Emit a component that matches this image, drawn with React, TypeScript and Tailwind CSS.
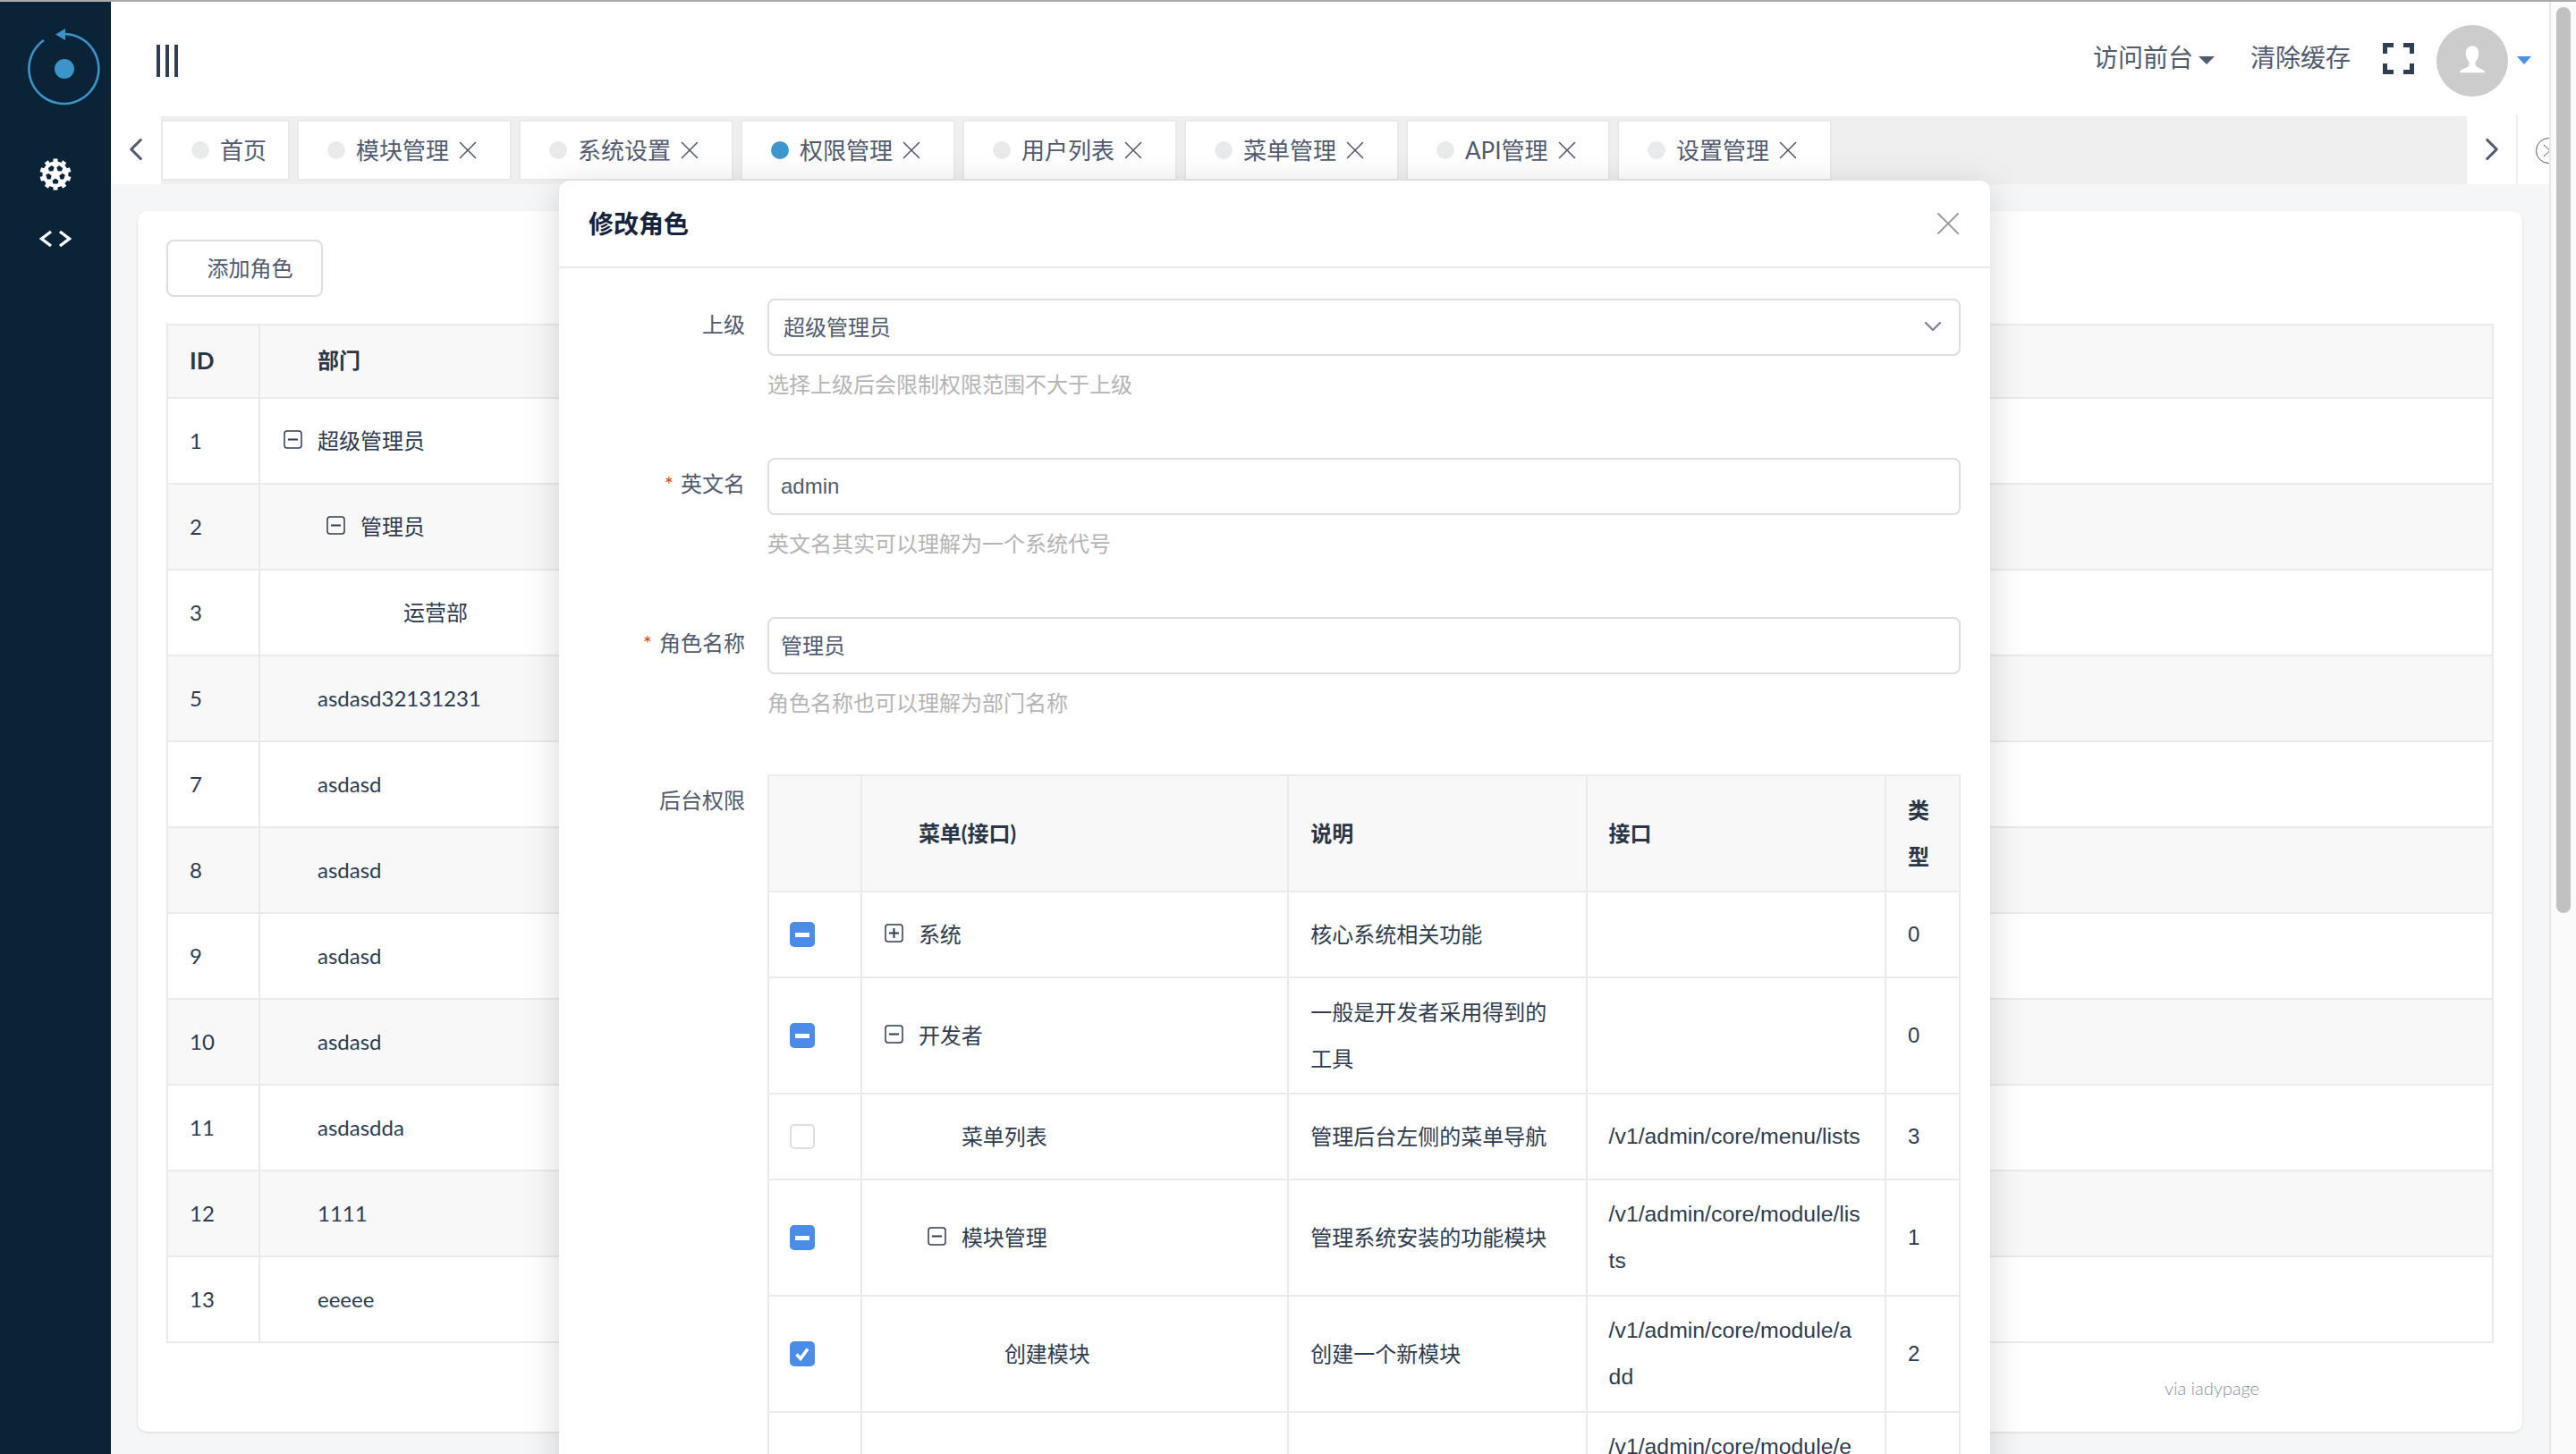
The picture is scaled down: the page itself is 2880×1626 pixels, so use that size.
import { ChevronDown, ChevronLeft, ChevronRight, X } from 'lucide-react'

const CJK = '"Noto Sans CJK SC"'

const TABS = [
  { name: '首页', w: 'w-[144px]', close: false },
  { name: '模块管理', w: 'w-[240px]', close: true },
  { name: '系统设置', w: 'w-[240px]', close: true },
  { name: '权限管理', w: 'w-[240px]', close: true, active: true },
  { name: '用户列表', w: 'w-[240px]', close: true },
  { name: '菜单管理', w: 'w-[240px]', close: true },
  { name: 'API管理', w: 'w-[228px]', close: true },
  { name: '设置管理', w: 'w-[240px]', close: true },
]

const ROLES: { id: number; name: string; level: number; tree?: boolean }[] = [
  { id: 1, name: '超级管理员', level: 0, tree: true },
  { id: 2, name: '管理员', level: 1, tree: true },
  { id: 3, name: '运营部', level: 2 },
  { id: 5, name: 'asdasd32131231', level: 0 },
  { id: 7, name: 'asdasd', level: 0 },
  { id: 8, name: 'asdasd', level: 0 },
  { id: 9, name: 'asdasd', level: 0 },
  { id: 10, name: 'asdasd', level: 0 },
  { id: 11, name: 'asdasdda', level: 0 },
  { id: 12, name: '1111', level: 0 },
  { id: 13, name: 'eeeee', level: 0 },
]

type Check = 'some' | 'none' | 'all'

const PERMS: { check: Check; name: string; level: number; icon?: '+' | '-'; desc: string; api: string; type: string }[] = [
  { check: 'some', name: '系统', level: 0, icon: '+', desc: '核心系统相关功能', api: '', type: '0' },
  { check: 'some', name: '开发者', level: 0, icon: '-', desc: '一般是开发者采用得到的工具', api: '', type: '0' },
  { check: 'none', name: '菜单列表', level: 1, desc: '管理后台左侧的菜单导航', api: '/v1/admin/core/menu/lists', type: '3' },
  { check: 'some', name: '模块管理', level: 1, icon: '-', desc: '管理系统安装的功能模块', api: '/v1/admin/core/module/lists', type: '1' },
  { check: 'all', name: '创建模块', level: 2, desc: '创建一个新模块', api: '/v1/admin/core/module/add', type: '2' },
  { check: 'none', name: '', level: 2, desc: '', api: '/v1/admin/core/module/edit', type: '' },
]

function GearIcon() {
  const teeth = [0, 36, 72, 108, 144, 180, 216, 252, 288, 324]
  const holes = [36, 108, 180, 252, 324]
  return (
    <svg viewBox="0 0 36 36" className="w-[36px] h-[36px] mt-[51px]">
      <circle cx="18" cy="18" r="14.500" fill="#fff" />
      {teeth.map((a) => (
        <rect key={a} x="15.500" y="0.500" width="5" height="5" fill="#fff" transform={`rotate(${a} 18 18)`} />
      ))}
      {holes.map((a) => (
        <path key={a} d="M15.500 7.500h5l1 3.500-3.500 2.500-3.500-2.500z" fill="#0b2336" transform={`rotate(${a} 18 18)`} />
      ))}
    </svg>
  )
}

function TreeIcon({ kind }: { kind: '+' | '-' }) {
  return (
    <svg viewBox="0 0 21 21" className="w-[21px] h-[21px] shrink-0 -mt-[3px] text-[#2f3b4e]">
      <rect x="1" y="1" width="19" height="19" rx="3" fill="none" stroke="currentColor" strokeWidth="1.5" />
      <path d="M5 10.500h11" stroke="currentColor" strokeWidth="2" />
      {kind === '+' && <path d="M10.500 5v11" stroke="currentColor" strokeWidth="2" />}
    </svg>
  )
}

function TreeCell({ name, level, icon }: { name: string; level: number; icon?: '+' | '-' }) {
  const pad = ['pl-[41px]', 'pl-[89px]', 'pl-[137px]'][level]
  const iconPad = ['left-[3px]', 'left-[51px]', 'left-[99px]'][level]
  return (
    <div className={`relative ${pad}`}>
      {icon && (
        <span className={`absolute top-1/2 -translate-y-1/2 flex ${iconPad}`}>
          <TreeIcon kind={icon} />
        </span>
      )}
      {name}
    </div>
  )
}

function CheckBox({ state }: { state: Check }) {
  if (state === 'none') {
    return <span className="block w-[28px] h-[28px] rounded-[5px] border-2 border-[#dcdee2] bg-white" />
  }
  return (
    <span className="flex items-center justify-center w-[28px] h-[28px] rounded-[5px] bg-[#4a8ce8]">
      {state === 'some' ? (
        <span className="block w-[16px] h-[5px] bg-white" />
      ) : (
        <svg viewBox="0 0 28 28" className="w-[28px] h-[28px]">
          <path d="M7.500 14.500l4.500 5 8-11" fill="none" stroke="#fff" strokeWidth="3.600" />
        </svg>
      )}
    </span>
  )
}

function FormRow({ label, required, hint, children }: { label: string; required?: boolean; hint: string; children: React.ReactNode }) {
  return (
    <div className="flex h-[178px]">
      <div className="w-[233px] pr-[25px] pt-[12px] text-right text-[24px] leading-[34px] text-[#515a6e] shrink-0">
        {required && <span className="text-[#ed4014] mr-[8px]">*</span>}
        {label}
      </div>
      <div className="flex-1">
        {children}
        <div className="mt-[15px] text-[24px] leading-[34px] text-[#b4b4b4]">{hint}</div>
      </div>
    </div>
  )
}

function TextInput({ value, latin, select }: { value: string; latin?: boolean; select?: boolean }) {
  return (
    <div
      className={`h-[64px] rounded-[8px] border-2 border-[#dcdee2] bg-white text-[24px] leading-[60px] text-[#515a6e] ${select ? 'pl-[16px]' : 'pl-[13px]'} ${latin ? 'font-["Liberation_Sans"]' : ''}`}
    >
      {value}
    </div>
  )
}

export default function App() {
  return (
    <div
      className="w-[2880px] h-[1626px] overflow-hidden flex flex-col bg-white text-[#2f3b4e] relative"
      style={{ fontFamily: `Lato, ${CJK}, sans-serif` }}
    >
      <div className="h-[2px] bg-[#aaaaaa] shrink-0" />
      <div className="flex flex-1 min-h-0">
        {/* Sidebar */}
        <aside className="w-[124px] shrink-0 bg-[#0b2336] flex flex-col items-center">
          <svg viewBox="0 0 124 124" className="w-[124px] h-[124px] shrink-0">
            <path d="M73 36A39 39 0 1 1 49 43" fill="none" stroke="#3c94cb" strokeWidth="2.600" />
            <path d="M62 36.500l11-6.500v13z" fill="#3c94cb" />
            <circle cx="72" cy="75" r="11" fill="#3c94cb" />
          </svg>
          <GearIcon />
          <svg viewBox="0 0 36 20" className="w-[36px] h-[20px] mt-[44px]">
            <path d="M13 2L2.500 10 13 18M23 2l10.500 8L23 18" fill="none" stroke="#fff" strokeWidth="3.400" />
          </svg>
        </aside>

        {/* Main column */}
        <div className="flex-1 flex flex-col min-w-0">
          <header className="h-[128px] shrink-0 flex items-center pl-[51px] pr-[20px]">
            <div className="flex gap-[6px] mt-[4px]">
              <span className="block w-[4px] h-[36px] bg-[#2f3e50]" />
              <span className="block w-[4px] h-[36px] bg-[#2f3e50]" />
              <span className="block w-[4px] h-[36px] bg-[#2f3e50]" />
            </div>
            <div className="ml-auto flex items-center text-[28px] text-[#515a6e]">
              <span className="-mt-[4px]">访问前台</span>
              <span className="ml-[6px] w-0 h-0 border-x-[9px] border-t-[9px] border-x-transparent border-t-[#515a6e] mt-[3px]" />
              <span className="ml-[40px] -mt-[4px]">清除缓存</span>
              <svg viewBox="0 0 35 35" className="ml-[36px] w-[35px] h-[35px] -mt-[1px]">
                <path d="M2.500 12V2.500H12M23 2.500h9.500V12M2.500 23v9.500H12M23 32.500h9.500V23" fill="none" stroke="#2f3e50" strokeWidth="5" />
              </svg>
              <span className="ml-[25px] w-[80px] h-[80px] mt-[4px] rounded-full bg-[#cccccc] flex items-center justify-center">
                <svg viewBox="0 0 40 40" className="w-[48px] h-[48px]">
                  <path d="M20 6c-4 0-6 3-6 7 0 3 1 6 3 8 .5 2-.2 4-2 5-3 1.500-6 2-7 5h24c-1-3-4-3.500-7-5-1.800-1-2.500-3-2-5 2-2 3-5 3-8 0-4-2-7-6-7z" fill="#fff" />
                </svg>
              </span>
              <span className="ml-[10px] w-0 h-0 border-x-[8px] border-t-[9px] border-x-transparent border-t-[#4a90e9] mt-[3px]" />
            </div>
          </header>

          {/* Tab strip */}
          <div className="h-[76px] shrink-0 flex">
            <div className="w-[56px] shrink-0 flex items-center justify-center -mt-[2px]">
              <ChevronLeft className="w-[42px] h-[42px] text-[#515a6e]" strokeWidth={1.8} />
            </div>
            <div className="flex-1 bg-[#efefef] flex gap-[8px] pt-[4px] pb-[4px] min-w-0">
              {TABS.map((tab) => (
                <div
                  key={tab.name}
                  className={`${tab.w} shrink-0 bg-white border-2 border-[#e9e9e9] flex items-center pl-[32px] text-[26px] text-[#515a6e]`}
                >
                  <span className={`block w-[20px] h-[20px] rounded-full mr-[12px] ${tab.active ? 'bg-[#3d97cd]' : 'bg-[#e8eaec]'}`} />
                  {tab.name}
                  {tab.close && <X className="ml-[4px] w-[34px] h-[34px] text-[#515a6e]" strokeWidth={1.1} />}
                </div>
              ))}
            </div>
            <div className="w-[57px] shrink-0 flex items-center justify-center -mt-[2px] border-r-2 border-[#f0f0f0]">
              <ChevronRight className="w-[42px] h-[42px] text-[#515a6e]" strokeWidth={1.8} />
            </div>
            <div className="w-[35px] shrink-0 relative overflow-hidden">
              <svg viewBox="0 0 29 29" className="absolute left-[20px] top-[24px] w-[29px] h-[29px]">
                <circle cx="14.500" cy="14.500" r="14" fill="none" stroke="#515a6e" strokeWidth="1" />
                <path d="M9 8l7 6.500L9 21" fill="none" stroke="#515a6e" strokeWidth="1" />
              </svg>
            </div>
          </div>

          {/* Content */}
          <main className="flex-1 bg-[#f4f6f8] pt-[30px] pl-[30px] pr-[30px] min-h-0">
            <div className="h-[1365px] bg-white rounded-[10px] shadow-[0_1px_3px_rgba(0,0,0,0.12)] px-[32px] pt-[32px]">
              <button className="h-[64px] w-[175px] rounded-[8px] border-2 border-[#dcdee2] bg-white text-[24px] text-[#515a6e] pl-[12px]">
                添加角色
              </button>
              <table className="mt-[30px] w-full table-fixed border-collapse border-2 border-[#e8eaec] text-[24px]">
                <colgroup>
                  <col className="w-[103px]" />
                  <col />
                </colgroup>
                <thead>
                  <tr className="h-[82px] bg-[#f8f8f9] font-bold text-[#2a3546]">
                    <th className="border-2 border-[#e8eaec] pl-[24px] pb-[2px] text-left text-[26px]">ID</th>
                    <th className="border-2 border-[#e8eaec] pl-[64px] pb-[2px] text-left">部门</th>
                  </tr>
                </thead>
                <tbody>
                  {ROLES.map((r, i) => (
                    <tr key={r.id} className={`h-[96px] ${i % 2 === 1 ? 'bg-[#f8f8f9]' : 'bg-white'}`}>
                      <td className="border-2 border-[#e8eaec] pl-[24px]">{r.id}</td>
                      <td className="border-2 border-[#e8eaec] pl-[23px]">
                        <TreeCell name={r.name} level={r.level} icon={r.tree ? '-' : undefined} />
                      </td>
                    </tr>
                  ))}
                </tbody>
              </table>
              <div className="mt-[35px] flex justify-end pr-[262px] text-[20px] font-light text-[#8a92a2]">via iadypage</div>
            </div>
          </main>
        </div>

        {/* Page scrollbar */}
        <div className="w-[30px] shrink-0 bg-[#fafafa] border-l-2 border-[#e8e8e8] pl-[6px] pt-[6px]">
          <div className="w-[16px] h-[1013px] rounded-full bg-[#c1c1c1]" />
        </div>
      </div>

      {/* Edit role modal */}
      <div className="absolute left-[625px] top-[202px] w-[1600px] h-[1500px] bg-white rounded-[12px] shadow-[0_8px_40px_rgba(0,0,0,0.16)]">
        <div className="h-[98px] border-b-2 border-[#e8eaec] flex items-center justify-between pl-[33px] pr-[25px]">
          <span className="text-[28px] font-bold text-[#17233d]">修改角色</span>
          <X className="w-[44px] h-[44px] text-[#999999]" strokeWidth={1} />
        </div>
        <div className="pt-[34px] pr-[33px]">
          <FormRow label="上级" hint="选择上级后会限制权限范围不大于上级">
            <div className="relative">
              <TextInput value="超级管理员" select />
              <ChevronDown className="absolute right-[15px] top-[15px] w-[32px] h-[32px] text-[#808695]" strokeWidth={1.8} />
            </div>
          </FormRow>
          <FormRow label="英文名" required hint="英文名其实可以理解为一个系统代号">
            <TextInput value="admin" latin />
          </FormRow>
          <FormRow label="角色名称" required hint="角色名称也可以理解为部门名称">
            <TextInput value="管理员" />
          </FormRow>
          <div className="flex -mt-[2px]">
            <div className="w-[233px] pr-[25px] pt-[12px] text-right text-[24px] leading-[34px] text-[#515a6e] shrink-0">后台权限</div>
            <table className="flex-1 table-fixed border-collapse border-2 border-[#e8eaec] text-[24px] leading-[52px]">
              <colgroup>
                <col className="w-[104px]" />
                <col className="w-[478px]" />
                <col className="w-[334px]" />
                <col className="w-[335px]" />
                <col className="w-[83px]" />
              </colgroup>
              <thead>
                <tr className="bg-[#f8f8f9] font-bold text-[#2a3546] text-left">
                  <th className="border-2 border-[#e8eaec]" />
                  <th className="border-2 border-[#e8eaec] pl-[63px]">菜单(接口)</th>
                  <th className="border-2 border-[#e8eaec] px-[24px]">说明</th>
                  <th className="border-2 border-[#e8eaec] px-[24px]">接口</th>
                  <th className="border-2 border-[#e8eaec] px-[24px] py-[12px]">类型</th>
                </tr>
              </thead>
              <tbody>
                {PERMS.map((p, i) => (
                  <tr key={i} className="h-[96px]">
                    <td className="border-2 border-[#e8eaec] pl-[23px]">
                      <CheckBox state={p.check} />
                    </td>
                    <td className="border-2 border-[#e8eaec] pl-[22px]">
                      <TreeCell name={p.name} level={p.level} icon={p.icon} />
                    </td>
                    <td className="border-2 border-[#e8eaec] px-[24px] py-[12px] break-all">{p.desc}</td>
                    <td className="border-2 border-[#e8eaec] px-[24px] py-[12px] break-all text-[24.8px] font-['Liberation_Sans']">{p.api}</td>
                    <td className="border-2 border-[#e8eaec] px-[24px] font-['Liberation_Sans']">{p.type}</td>
                  </tr>
                ))}
              </tbody>
            </table>
          </div>
        </div>
      </div>
    </div>
  )
}
